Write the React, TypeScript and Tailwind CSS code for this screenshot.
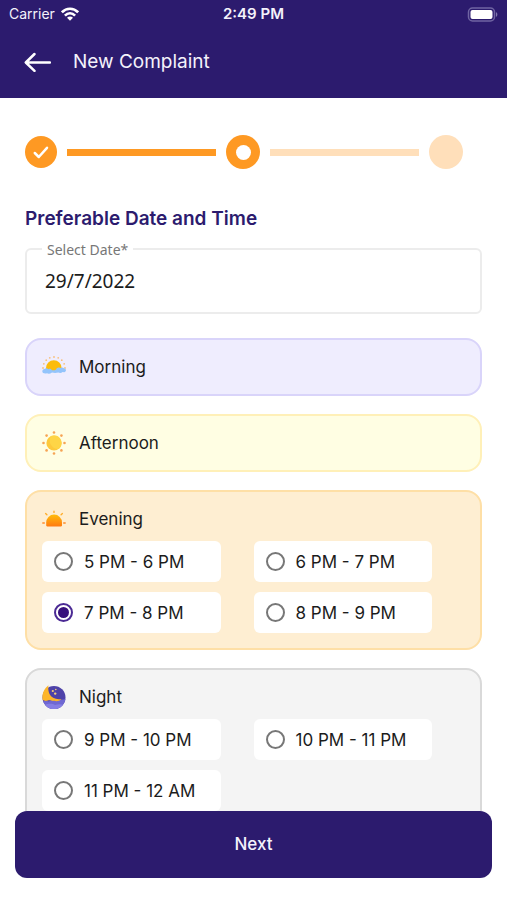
import { useState } from "react";
import type { ReactNode } from "react";

function rays(count: number, from: number, step: number) {
  return Array.from({ length: count }, (_, i) => ((from + i * step) * Math.PI) / 180);
}

function MorningIcon() {
  return (
    <svg viewBox="0 0 24 24" className="size-6" aria-hidden="true">
      {rays(9, 180, 22.5).map((a) => (
        <circle key={a} cx={12 + 11 * Math.cos(a)} cy={13 + 11 * Math.sin(a)} r="0.9" fill="#f8c07c" />
      ))}
      <path d="M4 16.500V13a7.800 7.800 0 0 1 15.600 0v3.500z" fill="#fbbc0d" />
      <path
        d="M2.500 14c1-1.200 3-1 3.800.2 1.200-.8 2.800-.4 3.400.8 1.600.6 3 .2 4.400-.6.6-1.600 2.600-2.400 4-1.400 1.400-.9 3-.6 3.800.3 1.800.3 2.400 1.500 1.900 2.600-.6 1.300-2 1.400-3.200 1.100-1.200 1.100-3 1.100-4.300.5-2.300.7-4.500.6-6.300 0-1.700 1.300-3.600 1.600-5 .8C2.500 18.900.3 18.200.3 16.300c0-1.200 1-2.200 2.200-2.300z"
        fill="#93c4fb"
      />
    </svg>
  );
}

function AfternoonIcon() {
  return (
    <svg viewBox="0 0 24 24" className="size-6" aria-hidden="true">
      {rays(8, 0, 45).map((a) => (
        <circle key={a} cx={12 + 10.5 * Math.cos(a)} cy={12 + 10.5 * Math.sin(a)} r="1.300" fill="#f6a455" />
      ))}
      <circle cx="12" cy="12" r="7.600" fill="#fdc93c" />
      <path d="M12 4.400a7.600 7.600 0 0 1 4.600 13.600A8.500 8.500 0 0 1 9 5z" fill="#fed546" />
    </svg>
  );
}

function EveningIcon() {
  return (
    <svg viewBox="0 0 24 24" className="size-6" aria-hidden="true">
      <defs>
        <linearGradient id="dusk" x1="0" y1="0" x2="0" y2="1">
          <stop offset="0" stopColor="#ffbc0a" />
          <stop offset="1" stopColor="#ff7a12" />
        </linearGradient>
      </defs>
      <path d="M5.200 19.500c-.7 0-1-.5-1-1.200V15.500a7.900 7.900 0 0 1 15.800 0v2.800c0 .7-.3 1.200-1 1.200z" fill="url(#dusk)" />
      <g stroke="#ffae2b" strokeWidth="1.400" strokeLinecap="round">
        <path d="M12 4.200v1.200M3.600 6.600l1.300 1.200M20.400 6.600l-1.300 1.200" />
        <path d="M.8 16h1.500M21.700 16h1.500" stroke="#ff8c2b" />
      </g>
    </svg>
  );
}

function NightIcon() {
  return (
    <svg viewBox="0 0 24 24" className="size-6" aria-hidden="true">
      <defs>
        <clipPath id="sky">
          <circle cx="12" cy="12.500" r="11.500" />
        </clipPath>
      </defs>
      <circle cx="12" cy="12.500" r="11.500" fill="#4e42a8" />
      <g clipPath="url(#sky)">
        <path d="M0 17c3-2 5-1 7-.5 2-2 5-2 6.500-.5 3-1.500 7-1 10.500-2v10H0z" fill="#6f68d2" />
        <path d="M3 20c4-2 8-1 10 0 3-1 6-1 9 0v4H3z" fill="#857ee4" />
      </g>
      <path
        d="M6.500.2C2 3.500-.2 9 .5 14.500c1.500 1.500 3.500 1.800 5.500 1 2-1 4 1 6 .3 2.500.8 5.500.4 7.500-1.800-5.500.9-10-1-12-5C6.300 6.400 6 3.200 6.500.2z"
        fill="#fdb52a"
      />
      <g fill="#f6cf7a">
        <circle cx="10.800" cy="6" r="1.100" />
        <circle cx="13.800" cy="4.500" r="0.800" />
        <circle cx="13.200" cy="8.600" r="1.200" />
      </g>
    </svg>
  );
}

type Period = {
  name: string;
  icon: ReactNode;
  tone: string;
  slots: string[];
};

const periods: Period[] = [
  { name: "Morning", icon: <MorningIcon />, tone: "border-[#d9d4fa] bg-[#efedfe]", slots: [] },
  { name: "Afternoon", icon: <AfternoonIcon />, tone: "border-[#fff0b8] bg-[#fffee3]", slots: [] },
  {
    name: "Evening",
    icon: <EveningIcon />,
    tone: "border-[#fedfa6] bg-[#feeed2]",
    slots: ["5 PM - 6 PM", "6 PM - 7 PM", "7 PM - 8 PM", "8 PM - 9 PM"],
  },
  {
    name: "Night",
    icon: <NightIcon />,
    tone: "border-[#d9d9d9] bg-[#f4f4f4]",
    slots: ["9 PM - 10 PM", "10 PM - 11 PM", "11 PM - 12 AM"],
  },
];

function StatusBar() {
  return (
    <div className="grid h-7 grid-cols-3 items-center px-[9px] text-[15px] leading-5">
      <span className="flex items-center gap-1.5 text-sm">
        Carrier
        <svg viewBox="0 0 18 14" className="h-3.5 w-[18px]" aria-label="Wi-Fi" fill="none" stroke="#fff" strokeWidth="2.600">
          <path d="M.9 5.300C5.500.6 12.500.6 17.100 5.300" />
          <path d="M3.900 8.600c3-3 7.200-3 10.200 0" />
          <path d="M9 13.800 6 10.800c1.700-1.600 4.300-1.600 6 0z" fill="#fff" stroke="none" />
        </svg>
      </span>
      <span className="text-center font-semibold">2:49 PM</span>
      <svg viewBox="0 0 31 15" className="h-[15px] w-[31px] justify-self-end" aria-label="Battery full">
        <rect x="1.500" y="1" width="26" height="13" rx="4" fill="none" stroke="#6f64a2" strokeWidth="1.500" />
        <rect x="3.500" y="3" width="22" height="9" rx="2" fill="#fff" />
        <path d="M29 5.200c1.800.5 1.800 4 0 4.600z" fill="#8177ae" />
      </svg>
    </div>
  );
}

function Stepper() {
  return (
    <div className="mr-[19px] flex h-[34px] items-center gap-2.5">
      <span className="flex size-8 items-center justify-center rounded-full bg-[#fe9923]">
        <svg viewBox="0 0 16 16" className="size-4" fill="none" stroke="#fff" strokeWidth="2.500" aria-hidden="true">
          <path d="m1.800 9 4 4L14 3.800" strokeLinecap="round" strokeLinejoin="round" />
        </svg>
      </span>
      <span className="h-[7px] flex-1 bg-[#fe9923]" />
      <span className="flex size-[34px] items-center justify-center rounded-full bg-[#fe9923]">
        <span className="size-[15px] rounded-full bg-white" />
      </span>
      <span className="h-[7px] flex-1 bg-[#ffdfba]" />
      <span className="size-[34px] rounded-full bg-[#ffdfba]" />
    </div>
  );
}

export default function App() {
  const [slot, setSlot] = useState("7 PM - 8 PM");

  return (
    <div className="flex h-screen flex-col bg-white font-['Inter',sans-serif] text-[#1c1c1c]">
      <header className="bg-[#2c1b6e] pb-4 text-[#f4f2fb]">
        <StatusBar />
        <div className="mt-[14px] flex h-10 items-center gap-[22px] px-6">
          <button type="button" aria-label="Back">
            <svg viewBox="0 0 27 20" className="h-5 w-[27px]" fill="none" stroke="#fff" strokeWidth="2.500" aria-hidden="true">
              <path d="M26 10.500H2M10.500 2 1.800 10.500l8.700 8.300" strokeLinecap="round" strokeLinejoin="round" />
            </svg>
          </button>
          <h1 className="text-[19px] leading-6">New Complaint</h1>
        </div>
      </header>

      <main className="min-h-0 flex-1 overflow-y-auto px-[25px] pt-[37px] [scrollbar-width:none]">
        <Stepper />

        <h2 className="mt-[38px] text-[19px] leading-6 font-semibold text-[#2c1b6e]">Preferable Date and Time</h2>

        <div className="relative mt-[17px] font-['Noto_Sans',sans-serif]">
          <label htmlFor="date" className="absolute -top-2 left-[17px] bg-white px-[5px] text-sm leading-5 text-[#777]">
            Select Date*
          </label>
          <input
            id="date"
            type="text"
            defaultValue="29/7/2022"
            className="block h-[66px] w-full rounded-md border-2 border-[#ececec] px-[18px] text-[19px] outline-none"
          />
        </div>

        <div className="mt-6 flex flex-col gap-[18px] pb-6">
          {periods.map((period) => (
            <section key={period.name} className={`rounded-2xl border-2 p-[15px] ${period.tone}`}>
              <button type="button" className="flex w-full items-center gap-[13px] text-left text-[17px] leading-6">
                {period.icon}
                {period.name}
              </button>
              {period.slots.length > 0 && (
                <div className="mt-2.5 grid grid-cols-2 gap-y-2.5">
                  {period.slots.map((name) => (
                    <label
                      key={name}
                      className="mr-[33px] flex h-[41px] items-center gap-[11px] rounded-md bg-white pl-3 text-[17px] leading-6 whitespace-nowrap"
                    >
                      <input
                        type="radio"
                        name="slot"
                        value={name}
                        checked={slot === name}
                        onChange={() => setSlot(name)}
                        className="size-[19px] shrink-0 appearance-none rounded-full border-2 border-[#777] bg-clip-content p-[2px] checked:border-[#4b2a94] checked:bg-[#38107c]"
                      />
                      {name}
                    </label>
                  ))}
                </div>
              )}
            </section>
          ))}
        </div>
      </main>

      <footer className="px-[15px] pb-[22px]">
        <button type="button" className="h-[67px] w-full rounded-xl bg-[#2c1b6e] text-[17px] font-medium text-[#f4f2fb]">
          Next
        </button>
      </footer>
    </div>
  );
}
